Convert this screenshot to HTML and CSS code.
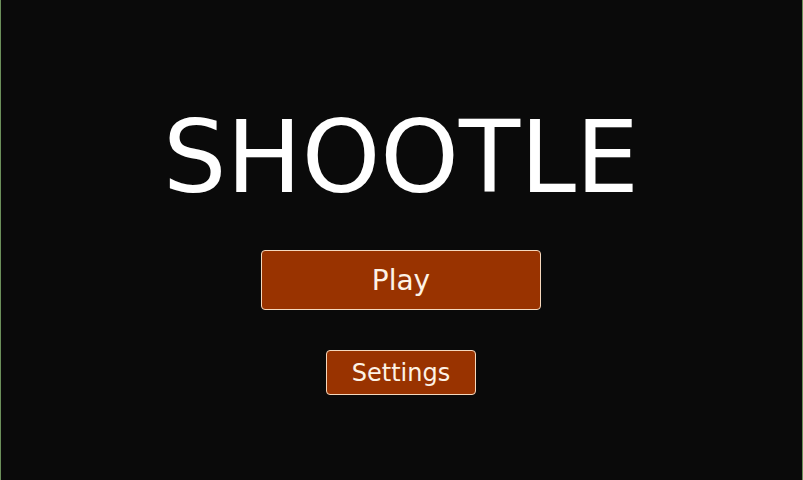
FILE: index.html
```html
<!DOCTYPE html>
<html lang="en">
<head>
<meta charset="utf-8">
<title>Shootle</title>
<link rel="stylesheet" href="styles.css">
</head>
<body>
<main class="screen">
  <h1 class="title">SHOOTLE</h1>
  <button class="btn btn-play">Play</button>
  <button class="btn btn-settings">Settings</button>
</main>
</body>
</html>
```
FILE: styles.css
```css
html, body {
  margin: 0;
  padding: 0;
  width: 803px;
  height: 480px;
  overflow: hidden;
  background: #0a0a0a;
}
.screen {
  box-sizing: border-box;
  width: 803px;
  height: 480px;
  border-left: 1px solid #6b8f5a;
  border-right: 1px solid #6b8f5a;
  display: flex;
  flex-direction: column;
  align-items: center;
  padding-top: 108px;
  padding-right: 1px;
  font-family: "DejaVu Sans", sans-serif;
}
.title {
  margin: 0;
  font-size: 100px;
  line-height: 100px;
  font-weight: normal;
  color: #ffffff;
}
.btn {
  box-sizing: border-box;
  background: #993300;
  border: 1px solid #f5d8bd;
  border-radius: 4px;
  color: #fdf2e6;
  font-family: "DejaVu Sans", sans-serif;
  padding: 0;
  display: flex;
  align-items: center;
  justify-content: center;
}
.btn-play {
  margin-top: 42px;
  width: 280px;
  height: 60px;
  font-size: 28px;
}
.btn-settings {
  margin-top: 40px;
  width: 150px;
  height: 45px;
  font-size: 24px;
}
```
